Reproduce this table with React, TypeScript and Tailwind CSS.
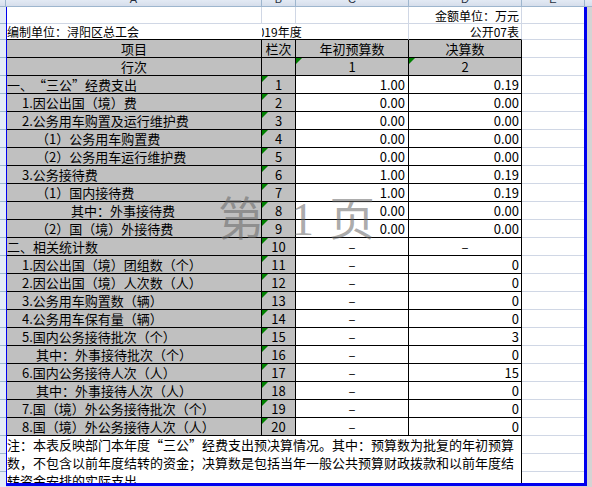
import React from 'react';

const GRID = 'border-[#d0d7e5]';

type Row = { label: string; pl: string; n: number; c: string; d: string };

const ROWS: Row[] = [
  { label: '一、“三公”经费支出', pl: 'pl-0', n: 1, c: '1.00', d: '0.19' },
  { label: '1.因公出国（境）费', pl: 'pl-[15px]', n: 2, c: '0.00', d: '0.00' },
  { label: '2.公务用车购置及运行维护费', pl: 'pl-[15px]', n: 3, c: '0.00', d: '0.00' },
  { label: '（1）公务用车购置费', pl: 'pl-[29px]', n: 4, c: '0.00', d: '0.00' },
  { label: '（2）公务用车运行维护费', pl: 'pl-[29px]', n: 5, c: '0.00', d: '0.00' },
  { label: '3.公务接待费', pl: 'pl-[15px]', n: 6, c: '1.00', d: '0.19' },
  { label: '（1）国内接待费', pl: 'pl-[29px]', n: 7, c: '1.00', d: '0.19' },
  { label: '其中：外事接待费', pl: 'pl-[64px]', n: 8, c: '0.00', d: '0.00' },
  { label: '（2）国（境）外接待费', pl: 'pl-[29px]', n: 9, c: '0.00', d: '0.00' },
  { label: '二、相关统计数', pl: 'pl-0', n: 10, c: '–', d: '–' },
  { label: '1.因公出国（境）团组数（个）', pl: 'pl-[15px]', n: 11, c: '–', d: '0' },
  { label: '2.因公出国（境）人次数（人）', pl: 'pl-[15px]', n: 12, c: '–', d: '0' },
  { label: '3.公务用车购置数（辆）', pl: 'pl-[15px]', n: 13, c: '–', d: '0' },
  { label: '4.公务用车保有量（辆）', pl: 'pl-[15px]', n: 14, c: '–', d: '0' },
  { label: '5.国内公务接待批次（个）', pl: 'pl-[15px]', n: 15, c: '–', d: '3' },
  { label: '其中：外事接待批次（个）', pl: 'pl-[29px]', n: 16, c: '–', d: '0' },
  { label: '6.国内公务接待人次（人）', pl: 'pl-[15px]', n: 17, c: '–', d: '15' },
  { label: '其中：外事接待人次（人）', pl: 'pl-[29px]', n: 18, c: '–', d: '0' },
  { label: '7.国（境）外公务接待批次（个）', pl: 'pl-[15px]', n: 19, c: '–', d: '0' },
  { label: '8.国（境）外公务接待人次（人）', pl: 'pl-[15px]', n: 20, c: '–', d: '0' },
];

const NOTE = [
  '注：本表反映部门本年度“三公”经费支出预决算情况。其中：预算数为批复的年初预算',
  '数，不包含以前年度结转的资金；决算数是包括当年一般公共预算财政拨款和以前年度结',
  '转资金安排的实际支出。',
];

// curly quotes are full width in the sheet font
const fw = (s: string) =>
  s.split(/([“”])/).map((p, i) =>
    p === '“' || p === '”' ? (
      <span key={i} className="[font-feature-settings:'fwid']">
        {p}
      </span>
    ) : (
      p
    )
  );

// green error marker in the top-left corner of a cell
const Tri = () => (
  <span className="absolute left-0 top-0 h-0 w-0 border-t-[6px] border-r-[6px] border-t-[#008000] border-r-transparent" />
);

const ColumnHeader = () => {
  const cols = [
    { l: 'A', w: 'w-[256px]' },
    { l: 'B', w: 'w-[34px]' },
    { l: 'C', w: 'w-[113px]' },
    { l: 'D', w: 'w-[113px]' },
    { l: 'E', w: 'w-[63px]' },
  ];
  return (
    <div className="flex h-[7px] overflow-hidden border-b border-[#9eb6ce] bg-gradient-to-b from-[#e3eaf4] to-[#d6deeb]">
      <div className="w-[6px] shrink-0 border-r border-[#9eb6ce]" />
      {cols.map((c) => (
        <div key={c.l} className={`${c.w} shrink-0 flex items-end justify-center border-r border-[#9eb6ce]`}>
          <span className="mb-[1px] font-['Liberation_Sans',sans-serif] text-[11px] leading-[11px] text-[#27313f]">{c.l}</span>
        </div>
      ))}
      <div className="flex-1" />
    </div>
  );
};

const RowHeaders = () => (
  <div className="flex w-[6px] shrink-0 flex-col bg-[#e4ecf7]">
    <div className="h-[17px] shrink-0 border-b border-[#9eb6ce]" />
    <div className="h-[16px] shrink-0 border-b border-[#9eb6ce]" />
    {Array.from({ length: 25 }).map((_, i) => (
      <div key={i} className="h-[18px] shrink-0 border-b border-[#9eb6ce]" />
    ))}
  </div>
);

const HeadRow = ({ a, c, d, b, tri }: { a: string; b?: string; c: string; d: string; tri?: boolean }) => (
  <div className="flex h-[18px] text-[13px] leading-[17px]">
    <div className="flex w-[255px] shrink-0 items-center justify-center border-b border-r border-black bg-[#c0c0c0]">{a}</div>
    <div className="flex w-[34px] shrink-0 items-center justify-center border-b border-r border-black bg-[#c0c0c0]">{b}</div>
    <div className="relative flex w-[113px] shrink-0 items-center justify-center border-b border-r border-black bg-[#c0c0c0]">
      {tri && <Tri />}
      {c}
    </div>
    <div className="relative flex w-[113px] shrink-0 items-center justify-center border-b border-r border-black bg-[#c0c0c0]">
      {tri && <Tri />}
      {d}
    </div>
    <div className={`w-[62px] shrink-0 border-b ${GRID}`} />
  </div>
);

const DataRow = ({ r }: { r: Row }) => {
  const dash = r.d === '–';
  return (
    <div className="flex h-[18px] text-[13px] leading-[17px]">
      <div className={`flex w-[255px] shrink-0 items-center whitespace-nowrap border-b border-r border-black bg-[#c0c0c0] ${r.pl}`}>
        {fw(r.label)}
      </div>
      <div className="relative flex w-[34px] shrink-0 items-center justify-center border-b border-r border-black bg-[#c0c0c0]">
        <Tri />
        {r.n}
      </div>
      <div
        className={`flex w-[113px] shrink-0 items-center border-b border-r border-black ${
          r.c === '–' ? 'justify-center' : 'justify-end pr-[3px]'
        }`}
      >
        {r.c}
      </div>
      <div
        className={`flex w-[113px] shrink-0 items-center border-b border-r border-black ${
          dash ? 'justify-center' : 'justify-end pr-[2px]'
        }`}
      >
        {r.d}
      </div>
      <div className={`w-[62px] shrink-0 border-b ${GRID}`} />
    </div>
  );
};

export default function App() {
  return (
    <div className="relative h-[487px] w-[592px] overflow-hidden bg-[#d4d4d4] font-['Noto_Sans_CJK_SC',sans-serif] text-black">
      <ColumnHeader />
      <div className="flex">
        <RowHeaders />
        <div className="h-[479px] w-[581px] shrink-0 overflow-hidden border-b-[3px] border-l border-r-[3px] border-[#0000ee] bg-white">
          {/* row 1 */}
          <div className="flex h-[17px] text-[12px] leading-[15px]">
            <div className={`w-[255px] shrink-0 border-b border-r ${GRID}`} />
            <div className={`w-[34px] shrink-0 border-b border-r ${GRID}`} />
            <div className={`w-[113px] shrink-0 border-b border-r ${GRID}`} />
            <div className={`flex w-[113px] shrink-0 items-end justify-end whitespace-nowrap border-b border-r pr-[2px] ${GRID}`}>
              金额单位：万元
            </div>
            <div className={`w-[62px] shrink-0 border-b ${GRID}`} />
          </div>
          {/* row 2 */}
          <div className="flex h-[16px] text-[12px] leading-[15px]">
            <div className="flex w-[255px] shrink-0 items-end whitespace-nowrap border-b border-black">编制单位：浔阳区总工会</div>
            <div className="relative z-10 flex w-[34px] shrink-0 items-end whitespace-nowrap border-b border-black [clip-path:inset(0_-80px_0_0)]">
              <span className="-ml-[11px]">2019年度</span>
            </div>
            <div className={`w-[113px] shrink-0 border-b border-b-black border-r ${GRID}`} />
            <div className={`flex w-[113px] shrink-0 items-end justify-end whitespace-nowrap border-b border-b-black border-r pr-[2px] ${GRID}`}>
              公开07表
            </div>
            <div className={`w-[62px] shrink-0 border-b ${GRID}`} />
          </div>
          <HeadRow a="项目" b="栏次" c="年初预算数" d="决算数" />
          <HeadRow a="行次" c="1" d="2" tri />
          {ROWS.map((r) => (
            <DataRow key={r.n} r={r} />
          ))}
          {/* note */}
          <div className="flex">
            <div className="w-[515px] shrink-0 overflow-hidden border-r border-black text-[13px] leading-[18px]">
              {NOTE.map((l) => (
                <div key={l} className="whitespace-nowrap">
                  {fw(l)}
                </div>
              ))}
            </div>
            <div className="flex w-[62px] shrink-0 flex-col">
              <div className={`h-[18px] border-b ${GRID}`} />
              <div className={`h-[18px] border-b ${GRID}`} />
              <div className={`h-[18px] border-b ${GRID}`} />
            </div>
          </div>
        </div>
      </div>
      {/* page watermark */}
      <div className="pointer-events-none absolute left-[218px] top-[197px] flex font-['Liberation_Serif','Noto_Sans_CJK_SC',serif] text-[46px] leading-[46px] text-[#646464]/55">
        <span>第</span>
        <span className="ml-[27px]">1</span>
        <span className="ml-[15px]">页</span>
      </div>
    </div>
  );
}
